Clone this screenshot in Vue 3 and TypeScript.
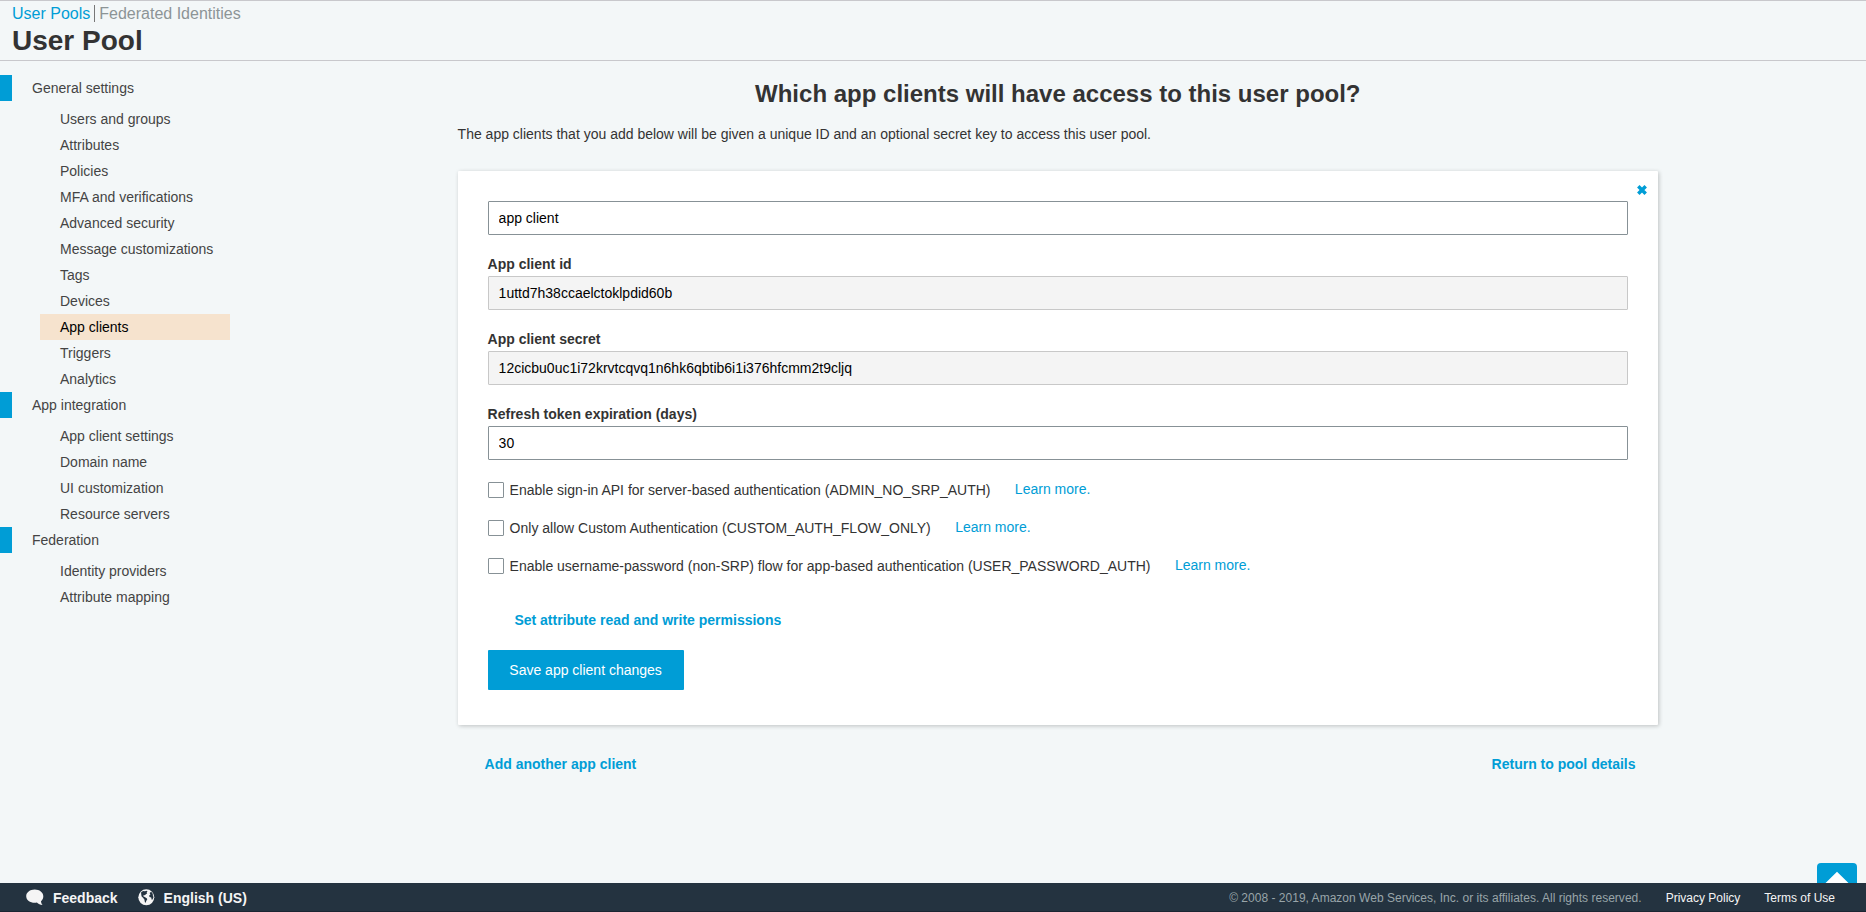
<script setup lang="ts">
import { ref } from 'vue'

interface Section { title: string; items: string[] }
interface AuthOption { label: string; checked: boolean }

const sections: Section[] = [
  {
    title: 'General settings',
    items: ['Users and groups', 'Attributes', 'Policies', 'MFA and verifications', 'Advanced security',
      'Message customizations', 'Tags', 'Devices', 'App clients', 'Triggers', 'Analytics'],
  },
  { title: 'App integration', items: ['App client settings', 'Domain name', 'UI customization', 'Resource servers'] },
  { title: 'Federation', items: ['Identity providers', 'Attribute mapping'] },
]
const active = ref('App clients')

const clientName = ref('app client')
const clientId = '1uttd7h38ccaelctoklpdid60b'
const clientSecret = '12cicbu0uc1i72krvtcqvq1n6hk6qbtib6i1i376hfcmm2t9cljq'
const expiration = ref('30')

const options = ref<AuthOption[]>([
  { label: 'Enable sign-in API for server-based authentication (ADMIN_NO_SRP_AUTH)', checked: false },
  { label: 'Only allow Custom Authentication (CUSTOM_AUTH_FLOW_ONLY)', checked: false },
  { label: 'Enable username-password (non-SRP) flow for app-based authentication (USER_PASSWORD_AUTH)', checked: false },
])
</script>

<template>
  <div class="page">
    <header class="header">
      <nav class="crumbs">
        <a class="crumb">User Pools</a>
        <a class="crumb muted">Federated Identities</a>
      </nav>
      <h1>User Pool</h1>
    </header>

    <div class="body">
      <aside class="sidebar">
        <section v-for="s in sections" :key="s.title">
          <div class="section-title">{{ s.title }}</div>
          <ul>
            <li v-for="item in s.items" :key="item" :class="{ active: item === active }" @click="active = item">{{ item }}</li>
          </ul>
        </section>
      </aside>

      <main class="main">
        <h2>Which app clients will have access to this user pool?</h2>
        <p class="intro">The app clients that you add below will be given a unique ID and an optional secret key to access this user pool.</p>

        <div class="card">
          <svg class="close" width="10" height="10" viewBox="0 0 10 10">
            <path d="M1.300 1.300 8.700 8.700M8.700 1.300 1.300 8.700" stroke="#009dd6" stroke-width="3.500" />
          </svg>
          <input v-model="clientName" class="field" type="text">
          <label class="label">App client id</label>
          <input class="field readonly" type="text" :value="clientId" readonly>
          <label class="label">App client secret</label>
          <input class="field readonly" type="text" :value="clientSecret" readonly>
          <label class="label">Refresh token expiration (days)</label>
          <input v-model="expiration" class="field" type="text">

          <div class="options">
            <div v-for="o in options" :key="o.label" class="option">
              <label class="check"><input v-model="o.checked" type="checkbox"><span>{{ o.label }}</span></label>
              <a class="learn">Learn more.</a>
            </div>
          </div>

          <a class="strong-link permissions">Set attribute read and write permissions</a>
          <button class="save" type="button">Save app client changes</button>
        </div>

        <div class="actions">
          <a class="strong-link">Add another app client</a>
          <a class="strong-link">Return to pool details</a>
        </div>
      </main>
    </div>

    <div class="to-top">
      <svg width="40" height="40" viewBox="0 0 40 40">
        <path d="M20 8.700 34 22.500H26V34H14V22.500H6Z" fill="#fff" />
      </svg>
    </div>

    <footer class="footer">
      <a class="tool feedback">
        <svg width="18" height="17" viewBox="0 0 18 17">
          <path d="M8.7 0.5C4 .5.2 3.400.2 7.200c0 3.800 3.800 6.600 8.500 6.600.8 0 1.500-.1 2.200-.2 1.500 1.400 3.300 2.200 5.700 2.400-1-1.100-1.500-2.300-1.600-3.800 1.500-1.300 2.300-3 2.300-5C17.300 3.400 13.500.5 8.700.5Z" fill="#f5f5f5" />
        </svg>
        <span>Feedback</span>
      </a>
      <a class="tool language">
        <svg width="17" height="17" viewBox="0 0 17 17">
          <circle cx="8.300" cy="8.300" r="8" fill="#f5f5f5" />
          <path d="M3 3.500 5 1.900 7 2.200 8.500 1.800 9.600 2.600 8.600 3.300 9.200 4.300 7.700 5.400 6.600 6.300 5.500 6.200 5.300 7.200 6.700 8 8.700 9.200 9.300 10.200 8.200 11.900 7.700 13.800 6.900 13.200 6.400 10.600 5 8.800 3.500 7.200Z" fill="#243340" />
          <path d="M11.600 3.900 13.200 2.800 14.900 5.100 14.700 6 15.500 8.200 14.500 10.500 13.700 10.700 13.200 8.500 11.500 8.100 11.200 6.600 12.400 5.400Z" fill="#243340" />
        </svg>
        <span>English (US)</span>
      </a>
      <div class="legal">
        <span class="copyright">© 2008 - 2019, Amazon Web Services, Inc. or its affiliates. All rights reserved.</span>
        <a>Privacy Policy</a>
        <a>Terms of Use</a>
      </div>
    </footer>
  </div>
</template>

<style>
html, body { margin: 0; background: #f3f7f8; }
</style>

<style scoped>
* { box-sizing: border-box; }
.page {
  position: relative;
  display: flex;
  flex-direction: column;
  height: 912px;
  overflow: hidden;
  background: #f3f7f8;
  color: #333;
  font: 14px/20px "Liberation Sans", Arial, sans-serif;
}
a { cursor: pointer; }
.header {
  height: 61px;
  padding: 4px 12px 0;
  border-top: 1px solid #c8c8cc;
  border-bottom: 1px solid #c8c8cc;
}
.crumbs { display: flex; height: 17px; font-size: 16px; line-height: 17px; }
.crumb { color: #009dd6; padding-right: 4px; }
.muted { color: #8c9496; border-left: 1px solid #777; padding-left: 4px; }
h1 { margin: 3px 0 0; font-size: 28px; line-height: 32px; }
.body { flex: 1; display: flex; min-height: 0; }
.sidebar { width: 230px; padding-top: 14px; color: #444; line-height: 26px; }
.section-title { border-left: 12px solid #009dd6; padding-left: 20px; }
ul { margin: 5px 0 0 40px; padding: 0; list-style: none; }
li { padding-left: 20px; cursor: pointer; }
li.active { background: #f6e3ce; color: #000; }
.main { width: 1200.4px; margin-left: 227.6px; padding-top: 17px; }
h2 { margin: 0; text-align: center; font-size: 24px; line-height: 32px; }
.intro { margin: 14px 0 27px; }
.card {
  position: relative;
  display: flex;
  flex-direction: column;
  align-items: flex-start;
  height: 554px;
  padding: 30px;
  background: #fff;
  border-radius: 1px;
  box-shadow: 1px 1px 4px rgba(0, 0, 0, .22);
}
.close { position: absolute; top: 13.5px; right: 11px; }
.field {
  width: 100%;
  height: 34px;
  padding: 0 10px;
  border: 1px solid #879196;
  border-radius: 1px;
  outline: 0;
  background: #fff;
  color: #000;
  font: inherit;
}
.readonly { background: #f4f4f4; border-color: #c8c8c8; }
.label { margin-top: 19px; margin-bottom: 2px; font-weight: bold; }
.options { display: flex; flex-direction: column; gap: 18px; margin-top: 20px; }
.option { display: flex; align-items: center; height: 20px; }
.check { display: flex; align-items: center; gap: 6px; }
.check input {
  appearance: none;
  width: 16px;
  height: 16px;
  margin: 0;
  border: 1px solid #879196;
  border-radius: 1px;
  background: #fff;
}
.learn { margin-left: 24.4px; position: relative; top: -1px; color: #009dd6; }
.strong-link { color: #009dd6; font-weight: bold; }
.permissions { margin: 34px 0 20px 26.8px; }
.save {
  width: 196px;
  height: 40px;
  padding: 0;
  border: 0;
  border-radius: 1px;
  background: #009dd6;
  color: #fff;
  font: inherit;
}
.actions { display: flex; justify-content: space-between; padding: 29px 22.5px 0 27px; }
.to-top {
  position: absolute;
  top: 863px;
  left: 1817px;
  width: 40px;
  height: 40px;
  border-radius: 4px;
  background: #009dd6;
}
.to-top svg { display: block; }
.footer {
  position: relative;
  display: flex;
  align-items: center;
  height: 29px;
  padding: 2px 31px 0 26px;
  background: #243340;
  border-bottom: 1px solid #1b2532;
  color: #f5f5f5;
}
.tool { display: flex; align-items: center; font-weight: bold; }
.tool svg { margin-top: -1px; }
.feedback { gap: 9px; }
.language { gap: 9px; margin-left: 20px; }
.legal { display: flex; gap: 24px; margin-left: auto; font-size: 12px; }
.copyright { color: #99a5a9; letter-spacing: .015px; }
</style>
